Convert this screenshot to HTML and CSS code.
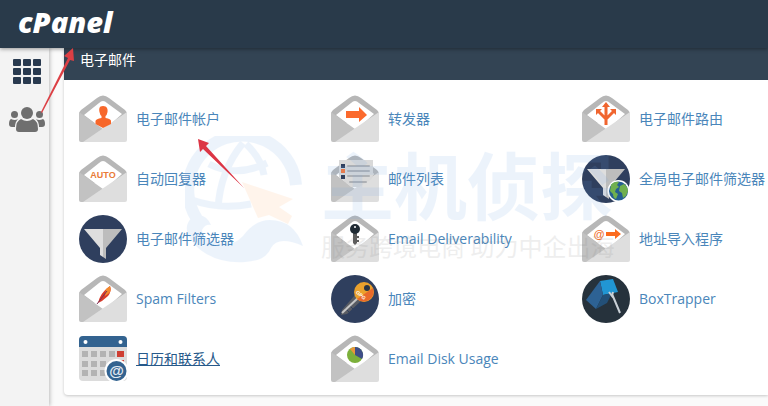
FILE: index.html
```html
<!DOCTYPE html>
<html lang="zh-CN">
<head>
<meta charset="utf-8">
<title>cPanel</title>
<link rel="stylesheet" href="styles.css">
</head>
<body>
<svg class="defs" aria-hidden="true">
  <symbol id="envelope" viewBox="0 0 48 48">
    <path d="M0 19Q0 17 2 15L18 3Q24-2 30 3L46 15Q48 17 48 19V28H0Z" fill="#b7b7b7"/>
    <path d="M5 20 20 8Q24 4 28 8L43 19 25 35Z" fill="#fff"/>
    <path d="M0 17 24 34 10 47H2Q0 47 0 45Z" fill="#c2c2c2"/>
    <path d="M48 17V45Q48 47 46 47H4L23 34Z" fill="#dedede"/>
  </symbol>
  <symbol id="funnel" viewBox="0 0 48 48">
    <circle cx="24" cy="24" r="24" fill="#2f3f5e"/>
    <path d="M5 14H24V42L21 40V33Z" fill="#dedede"/>
    <path d="M24 14H43L27 33V44L24 42Z" fill="#bdbdbd"/>
  </symbol>
</svg>

<header class="topbar"><a class="logo" href="#">cPanel</a></header>

<div class="shell">
  <nav class="sidebar" aria-label="主菜单">
    <a href="#" aria-label="主页">
      <svg width="28" height="26" viewBox="0 0 28 26" fill="#293a4f">
        <rect width="8" height="7" rx="1"/><rect x="10" width="8" height="7" rx="1"/><rect x="20" width="8" height="7" rx="1"/>
        <rect y="9" width="8" height="7" rx="1"/><rect x="10" y="9" width="8" height="7" rx="1"/><rect x="20" y="9" width="8" height="7" rx="1"/>
        <rect y="18" width="8" height="7" rx="1"/><rect x="10" y="18" width="8" height="7" rx="1"/><rect x="20" y="18" width="8" height="7" rx="1"/>
      </svg>
    </a>
    <a href="#" aria-label="用户管理">
      <svg width="36" height="26" viewBox="0 0 36 26" fill="#6f6f6f">
        <circle cx="18" cy="6" r="6"/><circle cx="5.500" cy="7.500" r="3.500"/><circle cx="30.500" cy="7.500" r="3.500"/>
        <path d="M12 12Q18 16 24 12Q29 14 29 22Q29 25 26 25H10Q7 25 7 22Q7 14 12 12Z"/>
        <path d="M2 12Q6 14 9 12Q6 15 6 20H3Q0 20 0 17Q0 13 2 12ZM34 12Q30 14 27 12Q30 15 30 20H33Q36 20 36 17Q36 13 34 12Z"/>
      </svg>
    </a>
  </nav>

  <main class="content">
    <section class="panel">
      <h2 class="panel-title">电子邮件</h2>
      <div class="panel-body">
        <ul class="apps">
          <li><a href="#">
            <svg class="icon" viewBox="0 0 48 48"><use href="#envelope"/><path d="M24 11C20 11 20 14 20.500 17Q21 20 22.500 21V23Q17 24 16.500 26V29L24 33 32 29V26Q32 24 26.500 23V21Q28 20 28.500 17C29 14 28 11 24 11Z" fill="#f7672a"/></svg>
            <span>电子邮件帐户</span></a></li>
          <li><a href="#">
            <svg class="icon" viewBox="0 0 48 48"><use href="#envelope"/><path d="M15 16H28V12L36 20 28 27V23H15Z" fill="#fb6a2d"/></svg>
            <span>转发器</span></a></li>
          <li><a href="#">
            <svg class="icon" viewBox="0 0 48 48"><use href="#envelope"/><path d="M24 30V10M24 24 16 16M24 24 32 16" stroke="#f0652f" stroke-width="3" fill="none"/><path d="M20 12 24 7 28 12ZM14 14H20L14 20ZM34 14H28L34 20Z" fill="#f0652f"/></svg>
            <span>电子邮件路由</span></a></li>
          <li><a href="#">
            <svg class="icon" viewBox="0 0 48 48"><use href="#envelope"/><text class="auto" x="24" y="23">AUTO</text></svg>
            <span>自动回复器</span></a></li>
          <li><a href="#">
            <svg class="icon" viewBox="0 0 48 48"><use href="#envelope"/><path d="M8 5H42V20Q42 24 36 27L28 32H20L8 22Z" fill="#d9d9d9"/><path d="M17 11H38M17 16H38M17 21H38M19 27H35" stroke="#aeb1b5" stroke-width="2" stroke-linecap="round"/><path d="M10 9H14V13H10ZM10 20H14V24H10Z" fill="#2f3f5e"/><path d="M10 14H14V18H10Z" fill="#f7773a"/></svg>
            <span>邮件列表</span></a></li>
          <li><a href="#">
            <svg class="icon" viewBox="0 0 48 48"><use href="#funnel"/><circle cx="36.500" cy="36" r="11" fill="#fff"/><circle cx="36.500" cy="36" r="9.500" fill="#255f91"/><path d="M29 30Q32 26 37 27L35 30 37 32 34 34 33 37 36 39 34 44Q31 43 31 39L28 36ZM38 31 42 29Q46 32 46 36L44 41 41 43 40 38 37 36Z" fill="#70b04e"/></svg>
            <span>全局电子邮件筛选器</span></a></li>
          <li><a href="#">
            <svg class="icon" viewBox="0 0 48 48"><use href="#funnel"/></svg>
            <span>电子邮件筛选器</span></a></li>
          <li><a href="#">
            <svg class="icon" viewBox="0 0 48 48"><use href="#envelope"/><path d="M22 17H26V28L24 30 22 28Z" fill="#5d5d5d"/><path d="M26 21H28V23H26ZM26 25H28V27H26Z" fill="#5d5d5d"/><circle cx="24" cy="14" r="5" fill="#202b34"/><circle cx="24" cy="12" r="1" fill="#fff"/></svg>
            <span>Email Deliverability</span></a></li>
          <li><a href="#">
            <svg class="icon" viewBox="0 0 48 48"><use href="#envelope"/><text class="at" x="17" y="23">@</text><path d="M24 17H33V14L39 19 33 24V21H24Z" fill="#fb6a1d"/></svg>
            <span>地址导入程序</span></a></li>
          <li><a href="#">
            <svg class="icon" viewBox="0 0 48 48"><use href="#envelope"/><path d="M31 11Q33 16 29 21L23 26 19 28Q21 18 31 11Z" fill="#d93b2a"/><path d="M31 11Q33 16 29 19L26 21 27 14Z" fill="#f28a2d"/><path d="M18 29 28 16" stroke="#78305a" stroke-width="1"/></svg>
            <span>Spam Filters</span></a></li>
          <li><a href="#">
            <svg class="icon" viewBox="0 0 48 48"><circle cx="24" cy="24" r="24" fill="#2f3f5e"/><path d="M24 20 30 26 16 39 10 40 11 35Z" fill="#595c63"/><path d="M14 33 18 37M18 30 22 34" stroke="#2f3f5e" stroke-width="1"/><path d="M28 22 11 38" stroke="#c5c5c5" stroke-width="2"/><circle cx="33" cy="17" r="10" fill="#eaa12d"/><path d="M42 13A10 10 0 0 1 26 24Z" fill="#e96a2b"/><circle cx="36" cy="13" r="3" fill="#293444"/><text class="gpg" x="30" y="22" transform="rotate(42 30 20)">GPG</text></svg>
            <span>加密</span></a></li>
          <li><a href="#">
            <svg class="icon" viewBox="0 0 48 48"><circle cx="24" cy="24" r="24" fill="#26323c"/><path d="M18 6 31 4 36 17 21 20Z" fill="#2196d3"/><path d="M18 6 21 20 14 34 4 25Z" fill="#2d6294"/><path d="M21 20 30 18 25 28 14 34Z" fill="#235078"/><path d="M30 19 38 38M27 17 30 21 31 17" fill="none" stroke="#c9d0d6" stroke-width="2"/></svg>
            <span>BoxTrapper</span></a></li>
          <li><a class="current" href="#">
            <svg class="icon" viewBox="0 0 48 48"><rect y="1" width="48" height="45" rx="4" fill="#dcdcdc"/><path d="M0 12V5Q0 1 4 1H44Q48 1 48 5V12Z" fill="#336390"/><circle cx="6.500" cy="7" r="2" fill="#fff"/><circle cx="41.500" cy="7" r="2" fill="#fff"/><path d="M3 16H9V22H3ZM12 16H18V22H12ZM21 16H27V22H21ZM30 16H36V22H30ZM3 26H9V32H3ZM12 26H18V32H12ZM21 26H27V32H21ZM3 35H9V41H3ZM12 35H18V41H12ZM21 35H27V41H21Z" fill="#b3b3b3"/><path d="M38 16H45V22H38ZM38 25H45V31H38Z" fill="#cf3f33"/><circle cx="37.500" cy="36" r="12" fill="#fff"/><circle cx="37.500" cy="36" r="10" fill="#336390"/><text class="at-light" x="37.500" y="41">@</text></svg>
            <span>日历和联系人</span></a></li>
          <li><a href="#">
            <svg class="icon" viewBox="0 0 48 48"><use href="#envelope"/><circle cx="24" cy="20" r="8" fill="#7cb03b"/><path d="M24 20V12A8 8 0 0 1 31 24Z" fill="#3e4e87"/><path d="M24 20 19 14A8 8 0 0 1 24 12Z" fill="#e8973a"/></svg>
            <span>Email Disk Usage</span></a></li>
        </ul>

        <div class="watermark" aria-hidden="true">
          <svg width="170" height="128" viewBox="0 0 170 128" fill="none">
            <path d="M12 83A54 54 0 1 1 111 49" stroke="#6ea5e6" stroke-width="12"/>
            <path d="M58 7Q35 35 33 73M24 28Q51 42 82 27M7 64Q35 74 66 68M61 8Q76 22 79 39" stroke="#6ea5e6" stroke-width="7"/>
            <path d="M57 46 108 63 94 71 107 80 103 88 84 79 73 82Z" fill="#ffad60"/>
            <path d="M26 89Q20 76 8 81Q-5 91 9 108Q28 128 60 126Q81 125 86 112Q93 99 118 110Q109 84 85 84Q70 84 58 100Q46 113 27 105Q17 101 17 94Q20 88 26 89Z" fill="#6ea5e6"/>
          </svg>
          <div class="watermark-text">
            <strong>主机侦探</strong>
            <span>服务跨境电商 助力中企出海</span>
          </div>
        </div>
      </div>
    </section>
  </main>
</div>

<svg class="arrows" width="250" height="190" viewBox="0 0 250 190" aria-hidden="true">
  <path d="M41 112 68 58 64 56 73 48 74 61 70 60 42 113Z" fill="#dc3f44"/>
  <path d="M244 188 203 149 200 152 198 139 209 143 206 146Z" fill="#dc3545"/>
</svg>
</body>
</html>
```
FILE: styles.css
```css
* {
  box-sizing: border-box;
}

body {
  margin: 0;
  min-height: 100vh;
  display: flex;
  flex-direction: column;
  overflow-x: hidden;
  background: #fafafa;
  font: 14px/20px "Open Sans", "Noto Sans CJK SC", sans-serif;
}

a {
  color: #4a86ba;
  text-decoration: none;
}

.defs {
  position: absolute;
  width: 0;
  height: 0;
}

.topbar {
  height: 48px;
  padding: 0 18px;
  display: flex;
  align-items: center;
  background: #293a4a;
  box-shadow: 0 1px 4px rgba(0, 0, 0, 0.4);
  z-index: 1;
}

.logo {
  color: #fff;
  font: italic 800 29px/44px "Open Sans", sans-serif;
  padding-bottom: 4px;
}

.shell {
  flex: 1;
  display: flex;
}

.sidebar {
  width: 49px;
  flex: none;
  display: flex;
  flex-direction: column;
  align-items: center;
  gap: 22px;
  padding: 11px 0 0 5px;
  background: #f3f3f3;
  box-shadow: 1px 0 4px rgba(0, 0, 0, 0.25);
}

.sidebar svg {
  display: block;
}

.content {
  flex: 1;
  padding-left: 15px;
}

.panel {
  background: #fff;
  border-radius: 0 0 0 4px;
  box-shadow: 0 1px 3px rgba(0, 0, 0, 0.2);
}

.panel-title {
  margin: 0;
  padding: 2px 16px 10px;
  background: #334454;
  color: #fff;
  font-size: 14px;
  font-weight: 400;
}

.panel-body {
  position: relative;
  padding: 15px 0 12px 15px;
}

.apps {
  margin: 0;
  padding: 0;
  list-style: none;
  display: grid;
  grid-template-columns: 252fr 251fr 186fr;
  row-gap: 12px;
}

.apps a {
  display: flex;
  align-items: center;
  gap: 9px;
  white-space: nowrap;
}

.apps .current {
  color: #27598a;
  text-decoration: underline;
}

.icon {
  width: 48px;
  height: 48px;
  flex: none;
}

.icon text {
  font-family: "Liberation Sans", sans-serif;
  font-weight: 700;
  text-anchor: middle;
}

.icon .auto {
  fill: #e97b38;
  font-size: 9px;
}

.icon .at {
  fill: #f0702f;
  font-size: 11px;
}

.icon .at-light {
  fill: #e3ebf3;
  font-size: 15px;
}

.icon .gpg {
  fill: #fff;
  font-size: 5px;
}

.watermark {
  position: absolute;
  top: 56px;
  left: 121px;
  display: flex;
  opacity: 0.12;
  pointer-events: none;
}

.watermark svg {
  width: 170px;
  margin-right: -34px;
}

.watermark-text {
  display: flex;
  flex-direction: column;
  white-space: nowrap;
}

.watermark strong {
  color: #6ea5e6;
  font: 700 73px/92px "Noto Sans CJK SC", sans-serif;
}

.watermark span {
  color: #777;
  font: 24px/36px "Noto Sans CJK SC", sans-serif;
}

.arrows {
  position: absolute;
  top: 0;
  left: 0;
  z-index: 2;
  pointer-events: none;
}
```
